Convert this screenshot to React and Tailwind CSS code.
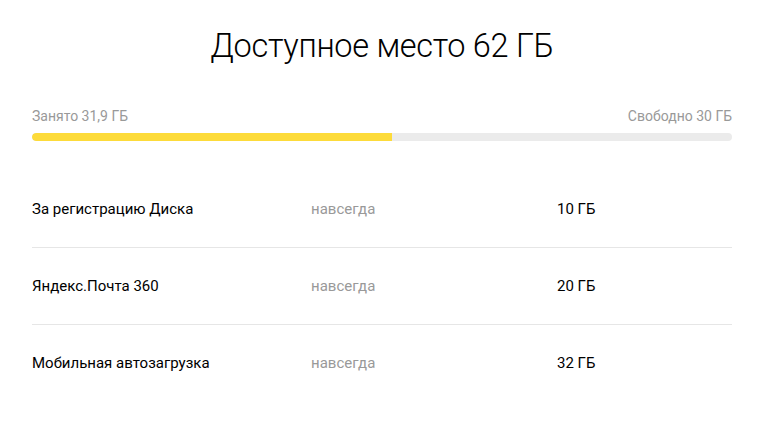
const rows = [
  { name: 'За регистрацию Диска', term: 'навсегда', size: '10 ГБ' },
  { name: 'Яндекс.Почта 360', term: 'навсегда', size: '20 ГБ' },
  { name: 'Мобильная автозагрузка', term: 'навсегда', size: '32 ГБ' },
];

export default function App() {
  const used = 31.9;
  const total = 62;

  return (
    <div className="min-h-screen bg-white font-['Roboto',sans-serif] text-black">
      <div className="ml-[32px] w-[700px] pt-[24px]">
        <h1 className="text-center text-[32.5px] font-light leading-[44px] tracking-[-0.3px]">
          Доступное место 62 ГБ
        </h1>

        <div className="mt-[40px] flex justify-between text-[14px] leading-[16px] text-[#999]">
          <span>Занято 31,9 ГБ</span>
          <span>Свободно 30 ГБ</span>
        </div>
        <div className="mt-[9px] h-[8px] rounded-full bg-[#ebebeb] overflow-hidden">
          <div className="h-full rounded-l-full bg-[#fddb3a]" style={{ width: `${(used / total) * 100}%` }} />
        </div>

        <div className="mt-[30px]">
          {rows.map((row, i) => (
            <div
              key={row.name}
              className={`flex h-[77px] items-center text-[15px] ${i < rows.length - 1 ? 'border-b border-[#e6e6e6]' : ''}`}
            >
              <span className="w-[279px]">{row.name}</span>
              <span className="w-[246px] text-[#999]">{row.term}</span>
              <span>{row.size}</span>
            </div>
          ))}
        </div>
      </div>
    </div>
  );
}
